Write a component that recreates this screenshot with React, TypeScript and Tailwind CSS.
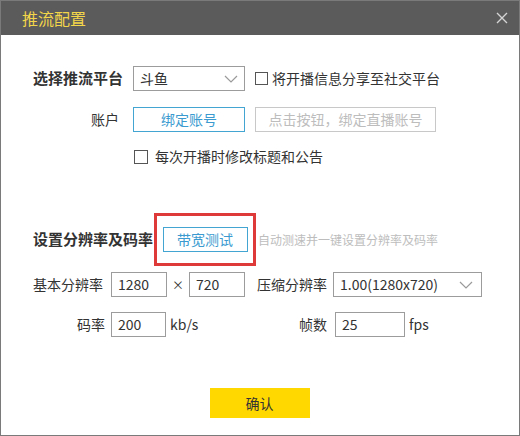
import React from "react";

const FONT = { fontFamily: '"Microsoft YaHei", "Noto Sans CJK SC", "Noto Sans", sans-serif' };

function Chevron() {
  return (
    <svg width="14" height="8" viewBox="0 0 14 8" fill="none">
      <path d="M1 1l6 6 6-6" stroke="#9a9a9a" strokeWidth="1.2" />
    </svg>
  );
}

function Box() {
  return <span className="inline-block w-[13px] h-[13px] border border-[#555] bg-white" />;
}

function Field({ value, w }: { value: string; w: string }) {
  return (
    <div className={`${w} h-[25px] border border-[#9c9c9c] bg-white flex items-center pl-[6px] text-[14px] text-[#333]`}>
      {value}
    </div>
  );
}

export default function App() {
  return (
    <div style={FONT} className="w-[520px] h-[436px] bg-white border border-[#7a7a7a] flex flex-col text-[#333]">
      {/* title bar */}
      <div className="h-[34px] bg-[#5b5b5b] flex items-center justify-between pl-[21px] pr-[11px] shrink-0">
        <span className="text-[16px] text-[#f3d64a]">推流配置</span>
        <svg width="12" height="12" viewBox="0 0 12 12">
          <path d="M1 1l10 10M11 1L1 11" stroke="#d4d4d4" strokeWidth="1.4" />
        </svg>
      </div>

      <div className="flex flex-col pl-[32px] pt-[31px]">
        {/* platform */}
        <div className="flex items-center h-[25px]">
          <span className="w-[100px] text-[15px] font-bold">选择推流平台</span>
          <div className="w-[112px] h-[25px] border border-[#9c9c9c] flex items-center justify-between pl-[6px] pr-[6px] text-[14px]">
            <span>斗鱼</span>
            <Chevron />
          </div>
          <label className="flex items-center ml-[10px] text-[14px]">
            <Box />
            <span className="ml-[4px]">将开播信息分享至社交平台</span>
          </label>
        </div>

        {/* account */}
        <div className="flex items-center h-[25px] mt-[16px]">
          <span className="w-[100px] text-[14px] text-right pr-[14px]">账户</span>
          <div className="w-[112px] h-[25px] border border-[#43a6d2] flex items-center justify-center text-[14px] text-[#3b9bd0]">
            绑定账号
          </div>
          <div className="w-[181px] h-[25px] ml-[10px] border border-[#c8c8c8] flex items-center justify-center text-[14px] text-[#bdbdbd]">
            点击按钮，绑定直播账号
          </div>
        </div>

        {/* edit title */}
        <div className="flex items-center mt-[14px] pl-[101px] text-[14px]">
          <span className="inline-block w-[14px] h-[14px] border border-[#555] bg-white" />
          <span className="ml-[7px]">每次开播时修改标题和公告</span>
        </div>

        {/* resolution header */}
        <div className="flex items-center mt-[46px]">
          <span className="text-[15px] font-bold w-[121px]">设置分辨率及码率</span>
          <div className="w-[102px] h-[53px] border-[3px] border-[#de3a3a] flex items-center justify-center">
            <div className="w-[85px] h-[25px] border border-[#43a6d2] flex items-center justify-center text-[14px] text-[#3b9bd0]">
              带宽测试
            </div>
          </div>
          <span className="ml-[2px] text-[12px] text-[#bdbdbd]">自动测速并一键设置分辨率及码率</span>
        </div>

        {/* base resolution */}
        <div className="flex items-center mt-[6px] h-[25px] text-[14px]">
          <span className="w-[78px]">基本分辨率</span>
          <Field value="1280" w="w-[56px]" />
          <span className="w-[22px] text-center text-[12px]">×</span>
          <Field value="720" w="w-[56px]" />
          <span className="ml-[12px] w-[76px]">压缩分辨率</span>
          <div className="w-[149px] h-[25px] border border-[#9c9c9c] flex items-center justify-between pl-[6px] pr-[8px] text-[14px]">
            <span>1.00(1280x720)</span>
            <Chevron />
          </div>
        </div>

        {/* bitrate */}
        <div className="flex items-center mt-[15px] h-[25px] text-[14px]">
          <span className="w-[78px] text-right pr-[6px]">码率</span>
          <Field value="200" w="w-[55px]" />
          <span className="ml-[4px] w-[129px]">kb/s</span>
          <span className="w-[36px]">帧数</span>
          <Field value="25" w="w-[70px]" />
          <span className="ml-[4px]">fps</span>
        </div>
      </div>

      <div className="flex justify-center mt-[51px]">
        <button className="w-[100px] h-[30px] bg-[#ffd800] text-[14px] text-[#333] ml-[-1px]">确认</button>
      </div>
    </div>
  );
}
